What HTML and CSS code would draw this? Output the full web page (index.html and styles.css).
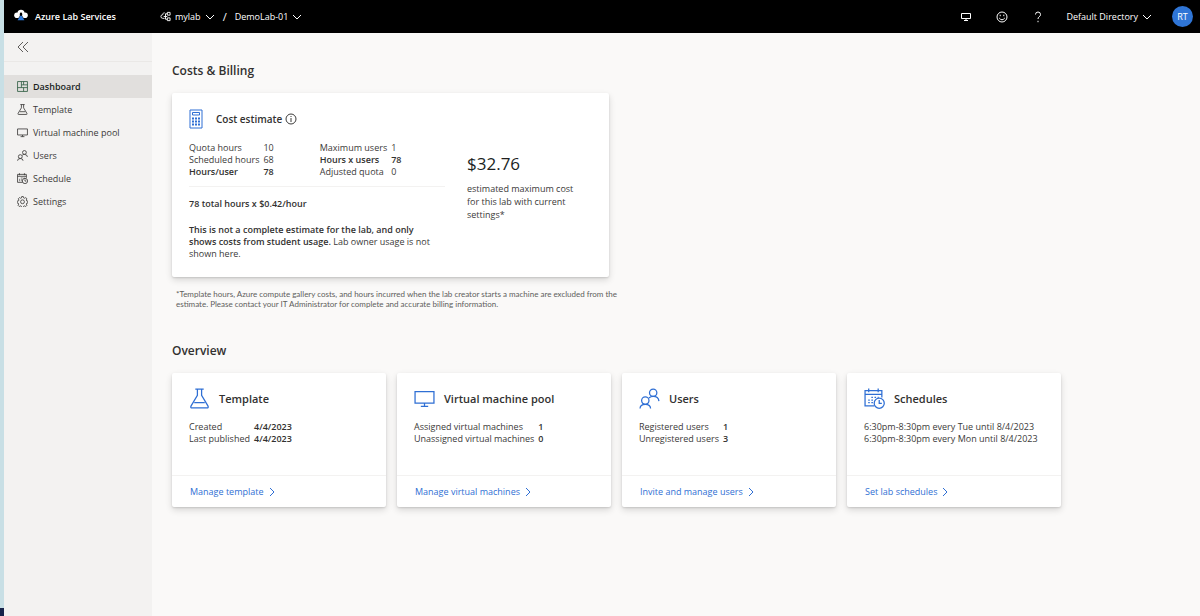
FILE: index.html
```html
<!DOCTYPE html>
<html lang="en">

<head>
  <meta charset="UTF-8" />
  <meta name="viewport" content="width=device-width, initial-scale=1" />
  <title>Azure Lab Services</title>
  <link rel="stylesheet" href="styles.css">
</head>

<body>
  <svg class="sprite" aria-hidden="true">
    <symbol id="flask" viewBox="0 0 20 20">
      <path d="M6 1h8M8 1v6L2 17q-1 2 1 2h14q2 0 1-2L12 7V1M5 14h10" />
    </symbol>
    <symbol id="monitor" viewBox="0 0 20 20">
      <path d="M1 3.500h18v11H1zM10 14.500v3M6.500 17.500h7" />
    </symbol>
    <symbol id="people" viewBox="0 0 20 20">
      <circle cx="13.500" cy="4.500" r="3.500" />
      <circle cx="6" cy="12" r="3.500" />
      <path d="M1 19.500q0-4 5-4t5 4M9.500 9.500q1.500-1.500 4-1.500 5 0 5.500 4.500" />
    </symbol>
    <symbol id="calendar" viewBox="0 0 20 20">
      <path d="M10 17H1V2.500h16V9M1 6h16M4.500 .5v3.500M13.500 .5v3.500" />
      <path d="M7 9h1.500M10 9h1.500M4 11.500h1.500M7 11.500h1.500M4 14h1.500M7 14h1.500M13 9h1" />
      <circle cx="14.500" cy="14.500" r="4.800" />
      <path d="M14.500 11.500v3.200H17" />
    </symbol>
    <symbol id="chevron-down" viewBox="0 0 10 10">
      <path d="M1 3l4 4 4-4" />
    </symbol>
    <symbol id="chevron-right" viewBox="0 0 10 10">
      <path d="M3 1l4 4-4 4" />
    </symbol>
  </svg>

  <div class="edge"></div>

  <div class="app">
    <header class="topbar">
      <a class="brand" href="#">
        <svg class="brand-logo" viewBox="0 0 14 12" aria-hidden="true">
          <circle cx="3" cy="6.200" r="2.800" fill="#fff" />
          <circle cx="11" cy="6.200" r="2.800" fill="#fff" />
          <path d="M3.500 4.500V3.500Q4 .8 7 .8t3.500 2.700v1L9 6 7.500 3.500h-1L5 6z" fill="#fff" />
          <path d="M6.200 4h1.600v3l3.200 4.500H3L6.200 7z" fill="#000" />
          <path d="M6.200 6.800h1.600l2.600 4.400H3.600z" fill="#2f7bdc" />
        </svg>
        <span>Azure Lab Services</span>
      </a>
      <nav class="crumbs" aria-label="Breadcrumb">
        <button class="crumb" type="button">
          <svg class="lab-icon" viewBox="0 0 12 12" aria-hidden="true">
            <path d="M5 2H4a3 3 0 0 0-1 2 2 2 0 0 0 0 4h2M4 6h4M6 3v6M6 3h2M6 9h2M8 1.500h3v3H8zM8 7.500h3v3H8z" />
          </svg>
          <span>mylab</span>
          <svg class="chevron"><use href="#chevron-down" /></svg>
        </button>
        <span class="slash">/</span>
        <button class="crumb" type="button">
          <span>DemoLab-01</span>
          <svg class="chevron"><use href="#chevron-down" /></svg>
        </button>
      </nav>
      <div class="tools">
        <button class="tool" type="button" aria-label="Virtual machines">
          <svg viewBox="0 0 12 12"><path d="M1.500 2.500h9v5h-9zM6 7.500v2M4 9.500h4" /></svg>
        </button>
        <button class="tool" type="button" aria-label="Feedback">
          <svg viewBox="0 0 12 12">
            <circle cx="6" cy="6" r="5" />
            <path d="M3.200 7q2.800 3.600 5.600 0M4.200 3.700v1.500M7.800 3.700v1.500" />
          </svg>
        </button>
        <button class="tool" type="button" aria-label="Help">
          <svg viewBox="0 0 12 12"><path d="M3.500 3.500Q3.500 1 6 1t2.500 2.500Q8.500 5 7.200 5.800T6 8M6 9.800v1.400" /></svg>
        </button>
        <button class="crumb" type="button">
          <span>Default Directory</span>
          <svg class="chevron"><use href="#chevron-down" /></svg>
        </button>
        <button class="avatar" type="button">RT</button>
      </div>
    </header>

    <div class="layout">
      <aside class="sidebar">
        <button class="collapse" type="button" aria-label="Collapse menu">
          <svg viewBox="0 0 12 12"><path d="M6 1L1 6l5 5M11 1L6 6l5 5" /></svg>
        </button>
        <nav class="menu">
          <a class="menu-item active" href="#">
            <svg viewBox="0 0 20 20"><path d="M1 1h18v18H1zM8 1v11M1 12h18M12 12v7M8 7h11M12 1v6" /></svg>
            <span>Dashboard</span>
          </a>
          <a class="menu-item" href="#"><svg><use href="#flask" /></svg><span>Template</span></a>
          <a class="menu-item" href="#"><svg><use href="#monitor" /></svg><span>Virtual machine pool</span></a>
          <a class="menu-item" href="#"><svg><use href="#people" /></svg><span>Users</span></a>
          <a class="menu-item" href="#"><svg><use href="#calendar" /></svg><span>Schedule</span></a>
          <a class="menu-item" href="#">
            <svg viewBox="0 0 20 20">
              <path d="M8.500 1h3l.6 2.400 1.700.7 2.100-1.200 2.200 2.200-1.200 2.100.7 1.700 2.400.6v3l-2.400.6-.7 1.700 1.200 2.100-2.200 2.200-2.100-1.200-1.700.7-.6 2.400h-3l-.6-2.400-1.700-.7-2.100 1.200-2.200-2.200 1.200-2.100-.7-1.700L0 12.500v-3l2.800-.6.7-1.700-1.200-2.100 2.200-2.200 2.100 1.200 1.700-.7z" />
              <circle cx="10" cy="10.500" r="3.500" />
            </svg>
            <span>Settings</span>
          </a>
        </nav>
      </aside>

      <main class="content">
        <section class="costs">
          <h1 class="section-title">Costs &amp; Billing</h1>
          <div class="card cost-card">
            <div class="cost-main">
              <div class="cost-head">
                <svg class="calculator" viewBox="0 0 14 20" aria-hidden="true">
                  <path d="M1 1h12v18H1z" />
                  <path d="M3.500 3.500h7v2.500h-7z" />
                  <path class="keys" d="M3 9.500h8M3 12.500h8M3 15.500h8" />
                </svg>
                <h2 class="cost-title">Cost estimate</h2>
                <button class="info" type="button" aria-label="About this estimate">
                  <svg viewBox="0 0 12 12"><circle cx="6" cy="6" r="5" /><path d="M6 5v4M6 3v1" /></svg>
                </button>
              </div>
              <div class="cost-tables">
                <table class="stats">
                  <tr><th scope="row">Quota hours</th><td>10</td></tr>
                  <tr><th scope="row">Scheduled hours</th><td>68</td></tr>
                  <tr class="total"><th scope="row">Hours/user</th><td>78</td></tr>
                </table>
                <table class="stats">
                  <tr><th scope="row">Maximum users</th><td>1</td></tr>
                  <tr class="total"><th scope="row">Hours x users</th><td>78</td></tr>
                  <tr><th scope="row">Adjusted quota</th><td>0</td></tr>
                </table>
              </div>
              <p class="formula">78 total hours x $0.42/hour</p>
              <p class="notice"><strong>This is not a complete estimate for the lab, and only shows costs from student usage.</strong> Lab owner usage is not shown here.</p>
            </div>
            <div class="cost-total">
              <div class="price">$32.76</div>
              <p class="price-note">estimated maximum cost for this lab with current settings*</p>
            </div>
          </div>
          <p class="footnote">*Template hours, Azure compute gallery costs, and hours incurred when the lab creator starts a machine are excluded from the estimate. Please contact your IT Administrator for complete and accurate billing information.</p>
        </section>

        <section>
          <h1 class="section-title">Overview</h1>
          <div class="cards">
            <article class="card tile">
              <div class="tile-head"><svg><use href="#flask" /></svg><h2>Template</h2></div>
              <table class="stats tile-stats">
                <tr><th scope="row">Created</th><td>4/4/2023</td></tr>
                <tr><th scope="row">Last published</th><td>4/4/2023</td></tr>
              </table>
              <div class="tile-foot"><a href="#">Manage template<svg><use href="#chevron-right" /></svg></a></div>
            </article>
            <article class="card tile">
              <div class="tile-head"><svg><use href="#monitor" /></svg><h2>Virtual machine pool</h2></div>
              <table class="stats tile-stats">
                <tr><th scope="row">Assigned virtual machines</th><td>1</td></tr>
                <tr><th scope="row">Unassigned virtual machines</th><td>0</td></tr>
              </table>
              <div class="tile-foot"><a href="#">Manage virtual machines<svg><use href="#chevron-right" /></svg></a></div>
            </article>
            <article class="card tile">
              <div class="tile-head"><svg><use href="#people" /></svg><h2>Users</h2></div>
              <table class="stats tile-stats">
                <tr><th scope="row">Registered users</th><td>1</td></tr>
                <tr><th scope="row">Unregistered users</th><td>3</td></tr>
              </table>
              <div class="tile-foot"><a href="#">Invite and manage users<svg><use href="#chevron-right" /></svg></a></div>
            </article>
            <article class="card tile">
              <div class="tile-head"><svg><use href="#calendar" /></svg><h2>Schedules</h2></div>
              <ul class="schedule">
                <li>6:30pm-8:30pm every Tue until 8/4/2023</li>
                <li>6:30pm-8:30pm every Mon until 8/4/2023</li>
              </ul>
              <div class="tile-foot"><a href="#">Set lab schedules<svg><use href="#chevron-right" /></svg></a></div>
            </article>
          </div>
        </section>
      </main>
    </div>
  </div>
</body>

</html>
```

FILE: styles.css
```css
* {
  box-sizing: border-box;
}

body {
  display: flex;
  margin: 0;
  min-height: 100vh;
  background: #faf9f8;
  color: #3b3a39;
  font: 9px/12px "Segoe UI", "Open Sans", "Noto Sans", sans-serif;
}

h1,
h2,
p,
ul {
  margin: 0;
  padding: 0;
}

a {
  color: inherit;
  text-decoration: none;
}

button {
  padding: 0;
  border: 0;
  background: none;
  color: inherit;
  font: inherit;
  cursor: pointer;
}

svg {
  flex: none;
  fill: none;
  stroke: currentColor;
}

.sprite {
  position: absolute;
  width: 0;
  height: 0;
}

/* strip of the window behind */
.edge {
  flex: none;
  width: 4px;
  background: #c8dfe5;
  border-bottom: 8px solid #17234a;
}

.app {
  display: flex;
  flex: 1;
  flex-direction: column;
  min-width: 0;
}

/* top bar */
.topbar {
  display: flex;
  align-items: center;
  height: 33px;
  padding: 0 7px 0 10px;
  background: #000;
  color: #fff;
}

.brand {
  display: flex;
  align-items: center;
  gap: 7px;
  width: 146px;
  font-weight: 600;
}

.brand-logo {
  width: 14px;
  height: 12px;
  margin-bottom: 3px;
  stroke: none;
}

.crumbs,
.crumb,
.tools {
  display: flex;
  align-items: center;
}

.crumbs {
  gap: 8px;
}

.crumb {
  gap: 4px;
}

.slash {
  font-size: 11px;
}

.lab-icon {
  width: 11px;
  height: 11px;
}

.chevron {
  width: 10px;
  height: 10px;
}

.tools {
  gap: 20px;
  margin-left: auto;
}

.tool {
  display: flex;
  justify-content: center;
  width: 16px;
}

.tool svg {
  width: 12px;
  height: 12px;
}

.avatar {
  width: 21px;
  height: 21px;
  border-radius: 50%;
  background: #2f75d6;
}

/* side menu */
.layout {
  display: flex;
  flex: 1;
}

.sidebar {
  flex: none;
  width: 148px;
  background: #f3f2f1;
}

.collapse {
  display: flex;
  align-items: center;
  width: 100%;
  height: 29px;
  padding-left: 13px;
  border-bottom: 1px solid #eae8e6;
  color: #605e5c;
}

.collapse svg {
  width: 12px;
  height: 12px;
}

.menu {
  padding-top: 13px;
}

.menu-item {
  display: flex;
  align-items: center;
  gap: 5px;
  height: 23px;
  padding-left: 13px;
}

.menu-item svg {
  width: 11px;
  height: 11px;
  stroke-width: 1.5;
}

.active {
  background: #e1dfdd;
  color: #201f1e;
  font-weight: 600;
}

.active svg {
  color: #2f5d43;
}

/* page */
.content {
  flex: 1;
  padding: 29px 20px;
}

.section-title {
  color: #323130;
  font-size: 12px;
  font-weight: 600;
  line-height: 18px;
}

.card {
  border-radius: 2px;
  background: #fff;
  box-shadow: 0 3px 7px rgba(0, 0, 0, .14), 0 1px 2px rgba(0, 0, 0, .12);
}

.costs {
  max-width: 448px;
  margin-bottom: 33px;
}

.cost-card {
  display: flex;
  gap: 22px;
  max-width: 437px;
  margin-top: 13px;
  padding: 16px 17px 17px;
}

.cost-main {
  width: 256px;
}

.cost-head {
  display: flex;
  align-items: center;
  height: 20px;
}

.calculator {
  width: 14px;
  height: 20px;
  color: #2f6fd4;
}

.keys {
  stroke-width: 2;
  stroke-dasharray: 2 1;
}

.cost-title {
  margin: 0 3px 0 13px;
  color: #323130;
  font-size: 10px;
  font-weight: 600;
}

.info {
  display: flex;
}

.info svg {
  width: 12px;
  height: 12px;
}

.cost-tables {
  display: flex;
  gap: 46px;
  padding: 13px 0 8px;
  border-bottom: 1px solid #f3f2f1;
}

.stats {
  border-spacing: 0;
}

.stats th {
  padding: 0 4px 0 0;
  font-weight: 400;
  text-align: left;
}

.stats td {
  padding: 0;
}

.stats .total > * {
  color: #323130;
  font-weight: 600;
}

.formula {
  margin: 11px 0 14px;
  color: #323130;
  font-weight: 600;
}

.notice {
  max-width: 246px;
}

.notice strong {
  color: #323130;
  font-weight: 600;
}

.cost-total {
  padding-top: 43px;
}

.price {
  color: #201f1e;
  font-size: 17px;
  font-weight: 500;
  line-height: 24px;
}

.price-note {
  max-width: 116px;
  margin-top: 6px;
  line-height: 13px;
}

.footnote {
  margin: 12px 0 0 4px;
  color: #605e5c;
  font-family: "Segoe UI", Lato, sans-serif;
  font-size: 8px;
  line-height: 10px;
}

.cards {
  display: grid;
  grid-template-columns: repeat(auto-fill, 214px);
  gap: 11px;
  margin-top: 13px;
}

.tile {
  display: flex;
  flex-direction: column;
  min-height: 134px;
}

.tile-head {
  display: flex;
  align-items: center;
  gap: 9px;
  padding: 15px 17px 0;
}

.tile-head svg {
  width: 21px;
  height: 21px;
  color: #2f6fd4;
  stroke-width: 1.2;
}

.tile-head h2 {
  color: #323130;
  font-size: 11px;
  font-weight: 600;
}

.tile-stats,
.schedule {
  align-self: flex-start;
  margin: 12px 17px 0;
  list-style: none;
}

.tile-stats td {
  color: #323130;
  font-weight: 600;
}

.tile-foot {
  margin-top: auto;
  padding: 10px 18px 9px;
  border-top: 1px solid #f3f2f1;
  color: #2f6fd4;
}

.tile-foot a {
  display: flex;
  align-items: center;
  gap: 3px;
}

.tile-foot svg {
  width: 10px;
  height: 10px;
}
```
